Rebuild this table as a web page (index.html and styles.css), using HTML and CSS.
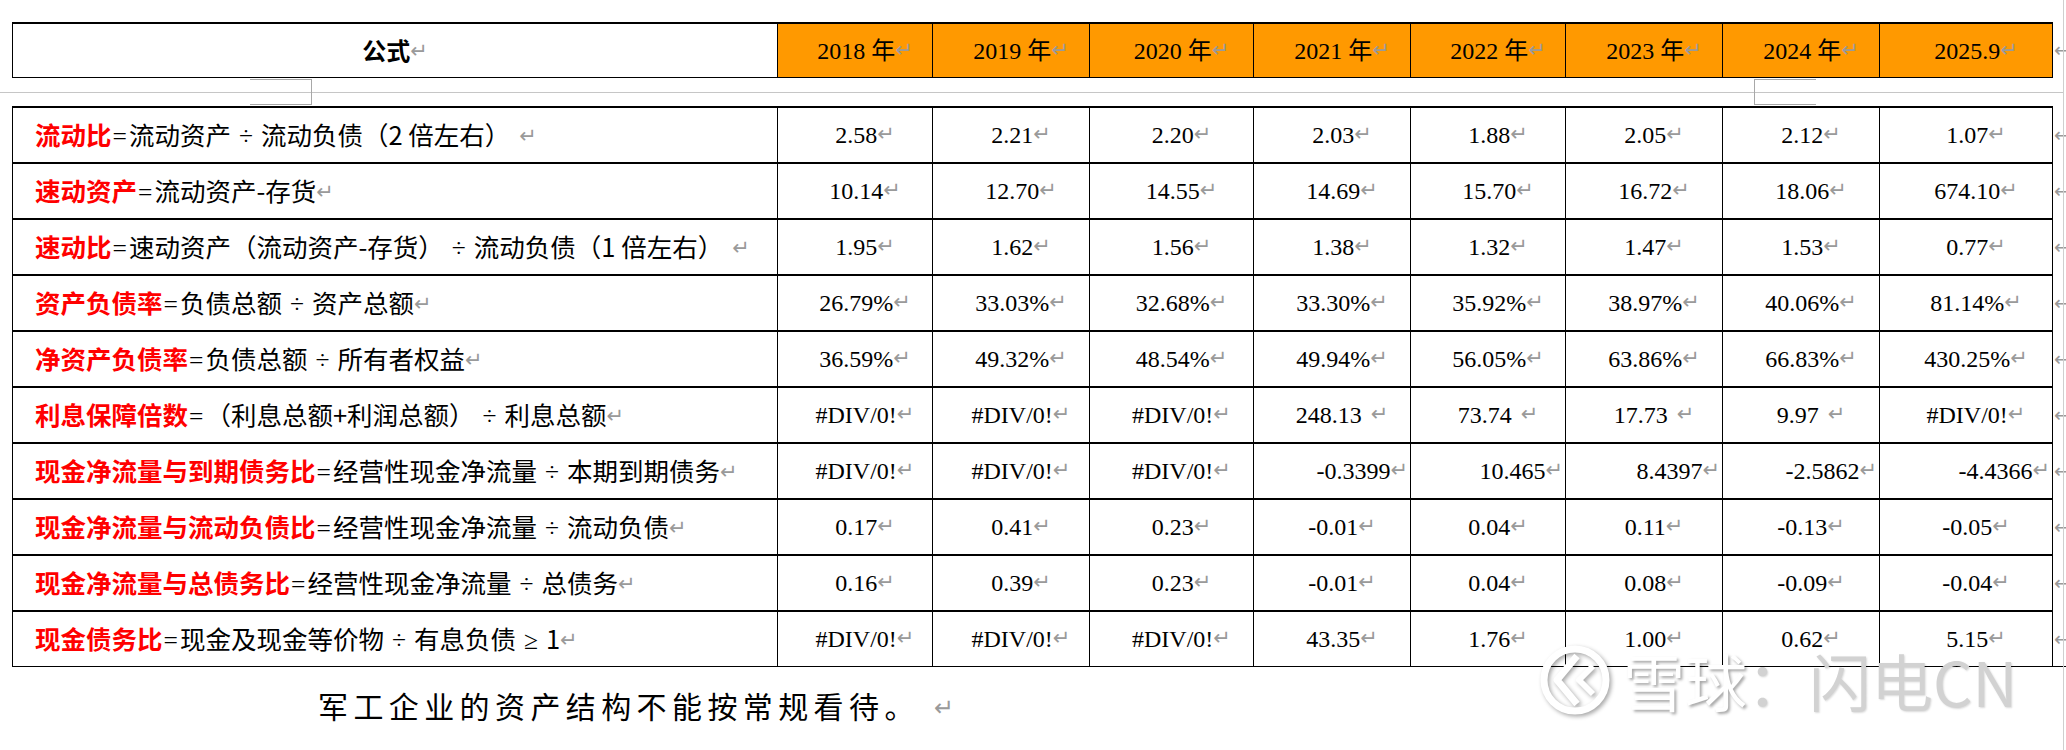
FILE: index.html
```html
<!DOCTYPE html>
<html lang="zh-CN">
<head>
<meta charset="utf-8">
<title>财务比率</title>
<link rel="stylesheet" href="styles.css">
</head>
<body>
<div class="page">
  <table class="grid hdr">
    <colgroup>
      <col class="c-first"><col class="c155"><col class="c157"><col class="c164"><col class="c157"><col class="c155"><col class="c157"><col class="c157"><col class="c173"><col class="c-end">
    </colgroup>
    <tr>
      <td class="head-f">公式<span class="pm">↵</span></td>
      <td class="yr">2018 年<span class="pm">↵</span></td>
      <td class="yr">2019 年<span class="pm">↵</span></td>
      <td class="yr">2020 年<span class="pm">↵</span></td>
      <td class="yr">2021 年<span class="pm">↵</span></td>
      <td class="yr">2022 年<span class="pm">↵</span></td>
      <td class="yr">2023 年<span class="pm">↵</span></td>
      <td class="yr">2024 年<span class="pm">↵</span></td>
      <td class="yr">2025.9<span class="pm">↵</span></td>
      <td class="end">←</td>
    </tr>
  </table>

  <div class="rule"></div>

  <table class="grid data">
    <colgroup>
      <col class="c-first"><col class="c155"><col class="c157"><col class="c164"><col class="c157"><col class="c155"><col class="c157"><col class="c157"><col class="c173"><col class="c-end">
    </colgroup>
    <tr>
      <td class="f"><span class="lbl">流动比</span><span class="eq">=</span>流动资产<span class="op">÷</span>流动负债（2 倍左右）<span class="pm sp">↵</span></td>
      <td class="v">2.58<span class="pm">↵</span></td><td class="v">2.21<span class="pm">↵</span></td><td class="v">2.20<span class="pm">↵</span></td><td class="v">2.03<span class="pm">↵</span></td><td class="v">1.88<span class="pm">↵</span></td><td class="v">2.05<span class="pm">↵</span></td><td class="v">2.12<span class="pm">↵</span></td><td class="v">1.07<span class="pm">↵</span></td>
      <td class="end">←</td>
    </tr>
    <tr>
      <td class="f"><span class="lbl">速动资产</span><span class="eq">=</span>流动资产-存货<span class="pm">↵</span></td>
      <td class="v">10.14<span class="pm">↵</span></td><td class="v">12.70<span class="pm">↵</span></td><td class="v">14.55<span class="pm">↵</span></td><td class="v">14.69<span class="pm">↵</span></td><td class="v">15.70<span class="pm">↵</span></td><td class="v">16.72<span class="pm">↵</span></td><td class="v">18.06<span class="pm">↵</span></td><td class="v">674.10<span class="pm">↵</span></td>
      <td class="end">←</td>
    </tr>
    <tr>
      <td class="f"><span class="lbl">速动比</span><span class="eq">=</span>速动资产（流动资产-存货）<span class="op">÷</span>流动负债（1 倍左右）<span class="pm sp">↵</span></td>
      <td class="v">1.95<span class="pm">↵</span></td><td class="v">1.62<span class="pm">↵</span></td><td class="v">1.56<span class="pm">↵</span></td><td class="v">1.38<span class="pm">↵</span></td><td class="v">1.32<span class="pm">↵</span></td><td class="v">1.47<span class="pm">↵</span></td><td class="v">1.53<span class="pm">↵</span></td><td class="v">0.77<span class="pm">↵</span></td>
      <td class="end">←</td>
    </tr>
    <tr>
      <td class="f"><span class="lbl">资产负债率</span><span class="eq">=</span>负债总额<span class="op">÷</span>资产总额<span class="pm">↵</span></td>
      <td class="v">26.79%<span class="pm">↵</span></td><td class="v">33.03%<span class="pm">↵</span></td><td class="v">32.68%<span class="pm">↵</span></td><td class="v">33.30%<span class="pm">↵</span></td><td class="v">35.92%<span class="pm">↵</span></td><td class="v">38.97%<span class="pm">↵</span></td><td class="v">40.06%<span class="pm">↵</span></td><td class="v">81.14%<span class="pm">↵</span></td>
      <td class="end">←</td>
    </tr>
    <tr>
      <td class="f"><span class="lbl">净资产负债率</span><span class="eq">=</span>负债总额<span class="op">÷</span>所有者权益<span class="pm">↵</span></td>
      <td class="v">36.59%<span class="pm">↵</span></td><td class="v">49.32%<span class="pm">↵</span></td><td class="v">48.54%<span class="pm">↵</span></td><td class="v">49.94%<span class="pm">↵</span></td><td class="v">56.05%<span class="pm">↵</span></td><td class="v">63.86%<span class="pm">↵</span></td><td class="v">66.83%<span class="pm">↵</span></td><td class="v">430.25%<span class="pm">↵</span></td>
      <td class="end">←</td>
    </tr>
    <tr>
      <td class="f"><span class="lbl">利息保障倍数</span><span class="eq">=</span>（利息总额+利润总额）<span class="op">÷</span>利息总额<span class="pm">↵</span></td>
      <td class="v">#DIV/0!<span class="pm">↵</span></td><td class="v">#DIV/0!<span class="pm">↵</span></td><td class="v">#DIV/0!<span class="pm">↵</span></td><td class="v">248.13<span class="pm sp">↵</span></td><td class="v">73.74<span class="pm sp">↵</span></td><td class="v">17.73<span class="pm sp">↵</span></td><td class="v">9.97<span class="pm sp">↵</span></td><td class="v">#DIV/0!<span class="pm">↵</span></td>
      <td class="end">←</td>
    </tr>
    <tr>
      <td class="f"><span class="lbl">现金净流量与到期债务比</span><span class="eq">=</span>经营性现金净流量<span class="op">÷</span>本期到期债务<span class="pm">↵</span></td>
      <td class="v">#DIV/0!<span class="pm">↵</span></td><td class="v">#DIV/0!<span class="pm">↵</span></td><td class="v">#DIV/0!<span class="pm">↵</span></td><td class="v r">-0.3399<span class="pm">↵</span></td><td class="v r">10.465<span class="pm">↵</span></td><td class="v r">8.4397<span class="pm">↵</span></td><td class="v r">-2.5862<span class="pm">↵</span></td><td class="v r">-4.4366<span class="pm">↵</span></td>
      <td class="end">←</td>
    </tr>
    <tr>
      <td class="f"><span class="lbl">现金净流量与流动负债比</span><span class="eq">=</span>经营性现金净流量<span class="op">÷</span>流动负债<span class="pm">↵</span></td>
      <td class="v">0.17<span class="pm">↵</span></td><td class="v">0.41<span class="pm">↵</span></td><td class="v">0.23<span class="pm">↵</span></td><td class="v">-0.01<span class="pm">↵</span></td><td class="v">0.04<span class="pm">↵</span></td><td class="v">0.11<span class="pm">↵</span></td><td class="v">-0.13<span class="pm">↵</span></td><td class="v">-0.05<span class="pm">↵</span></td>
      <td class="end">←</td>
    </tr>
    <tr>
      <td class="f"><span class="lbl">现金净流量与总债务比</span><span class="eq">=</span>经营性现金净流量<span class="op">÷</span>总债务<span class="pm">↵</span></td>
      <td class="v">0.16<span class="pm">↵</span></td><td class="v">0.39<span class="pm">↵</span></td><td class="v">0.23<span class="pm">↵</span></td><td class="v">-0.01<span class="pm">↵</span></td><td class="v">0.04<span class="pm">↵</span></td><td class="v">0.08<span class="pm">↵</span></td><td class="v">-0.09<span class="pm">↵</span></td><td class="v">-0.04<span class="pm">↵</span></td>
      <td class="end">←</td>
    </tr>
    <tr class="last">
      <td class="f"><span class="lbl">现金债务比</span><span class="eq">=</span>现金及现金等价物<span class="op">÷</span>有息负债<span class="op">≥</span>1<span class="pm">↵</span></td>
      <td class="v">#DIV/0!<span class="pm">↵</span></td><td class="v">#DIV/0!<span class="pm">↵</span></td><td class="v">#DIV/0!<span class="pm">↵</span></td><td class="v">43.35<span class="pm">↵</span></td><td class="v">1.76<span class="pm">↵</span></td><td class="v">1.00<span class="pm">↵</span></td><td class="v">0.62<span class="pm">↵</span></td><td class="v">5.15<span class="pm">↵</span></td>
      <td class="end">←</td>
    </tr>
  </table>

  <p class="note">军工企业的资产结构不能按常规看待。<span class="pm big">↵</span></p>
</div>

<div class="mover mover-l"></div>
<div class="mover mover-r"></div>
<div class="edge"></div>

<div class="watermark">
  <svg class="wm-logo" width="76" height="76" viewBox="0 0 76 76">
    <circle cx="38" cy="38" r="31" fill="none" stroke="#ffffff" stroke-width="7"/>
    <path d="M40 14 L20 38 L40 62" fill="none" stroke="#ffffff" stroke-width="7" stroke-linejoin="round"/>
    <path d="M56 24 L42 38 L56 52" fill="none" stroke="#ffffff" stroke-width="6" stroke-linejoin="round"/>
  </svg>
  <span class="wm-a">雪球</span><span class="wm-b">：闪电CN</span>
</div>
</body>
</html>
```

FILE: styles.css
```css
html, body {
  margin: 0;
  padding: 0;
}
body {
  width: 2066px;
  height: 750px;
  overflow: hidden;
  background: #ffffff;
  position: relative;
  color: #000000;
  font-family: "Liberation Serif", "Noto Sans CJK SC", serif;
}
.page {
  padding-top: 22px;
}
.grid {
  border-collapse: collapse;
  table-layout: fixed;
  margin-left: 12px;
  width: 2054px;
}
.c-first { width: 765px; }
.c155 { width: 155px; }
.c157 { width: 157px; }
.c164 { width: 164px; }
.c173 { width: 173px; }
.c-end { width: 14px; }

.grid td {
  padding: 0;
  line-height: 1;
  vertical-align: middle;
  white-space: nowrap;
  border-left: 1px solid #000;
  border-right: 1px solid #000;
}
.hdr td {
  height: 53px;
  border-top: 2px solid #000;
  border-bottom: 1px solid #000;
  text-align: center;
  font-size: 24px;
}
.hdr .head-f {
  font-family: "Noto Sans CJK SC", sans-serif;
  font-weight: bold;
  font-size: 24px;
}
.hdr .yr {
  background: #ff9900;
  padding-left: 20px;
}
.data tr td {
  height: 54px;
  border-top: 2px solid #000;
}
.data tr.last td {
  border-bottom: 1px solid #000;
}
.grid td.end {
  border: none;
  text-align: left;
  color: #9a9a9a;
  font-family: "DejaVu Sans", sans-serif;
  font-size: 20px;
  overflow: hidden;
  padding-left: 1px;
}
.data td.f {
  padding-left: 22px;
  font-size: 25.5px;
  font-family: "Noto Sans CJK SC", sans-serif;
}
.eq {
  font-family: "Liberation Serif", serif;
  margin: 0 2px 0 1px;
}
.op {
  font-family: "Liberation Serif", serif;
  margin: 0 8px;
}
.lbl {
  color: #ff0000;
  font-weight: bold;
}
.data td.v {
  text-align: center;
  padding-left: 20px;
  font-size: 24px;
}
.data td.v.r {
  text-align: right;
  padding-left: 0;
  padding-right: 2px;
}
.pm {
  color: #9a9a9a;
  font-family: "DejaVu Sans", sans-serif;
  font-size: 21px;
  font-weight: normal;
  position: relative;
  top: -2px;
}
.pm.sp {
  margin-left: 9px;
}
.pm.big {
  font-size: 24px;
  margin-left: 14px;
  letter-spacing: 0;
}
.rule {
  width: 2063px;
  height: 1px;
  background: #c6c6c6;
  margin: 14px 0 13px;
}
.note {
  margin: 20px 0 0 318px;
  font-family: "Noto Sans CJK SC", sans-serif;
  font-size: 30px;
  letter-spacing: 5.4px;
  line-height: 1.2;
}
.mover {
  position: absolute;
  top: 79px;
  width: 61px;
  height: 24px;
  border: 1px solid #a8a8a8;
}
.mover-l {
  left: 250px;
  border-left: none;
}
.mover-r {
  left: 1754px;
  border-right: none;
}
.edge {
  position: absolute;
  top: 0;
  left: 2063px;
  width: 1px;
  height: 750px;
  background: #cfcfcf;
}
.watermark {
  position: absolute;
  left: 1537px;
  top: 642px;
  display: flex;
  align-items: center;
  font-family: "Noto Sans CJK SC", sans-serif;
  font-size: 62px;
  line-height: 1;
}
.wm-logo {
  filter: drop-shadow(2px 2px 2px rgba(0, 0, 0, 0.35));
  margin-right: 10px;
}
.wm-a {
  color: #ffffff;
  text-shadow: 2px 2px 3px rgba(0, 0, 0, 0.35);
}
.wm-b {
  color: #d2d2d2;
  text-shadow: 1px 1px 2px rgba(0, 0, 0, 0.15);
}
```
